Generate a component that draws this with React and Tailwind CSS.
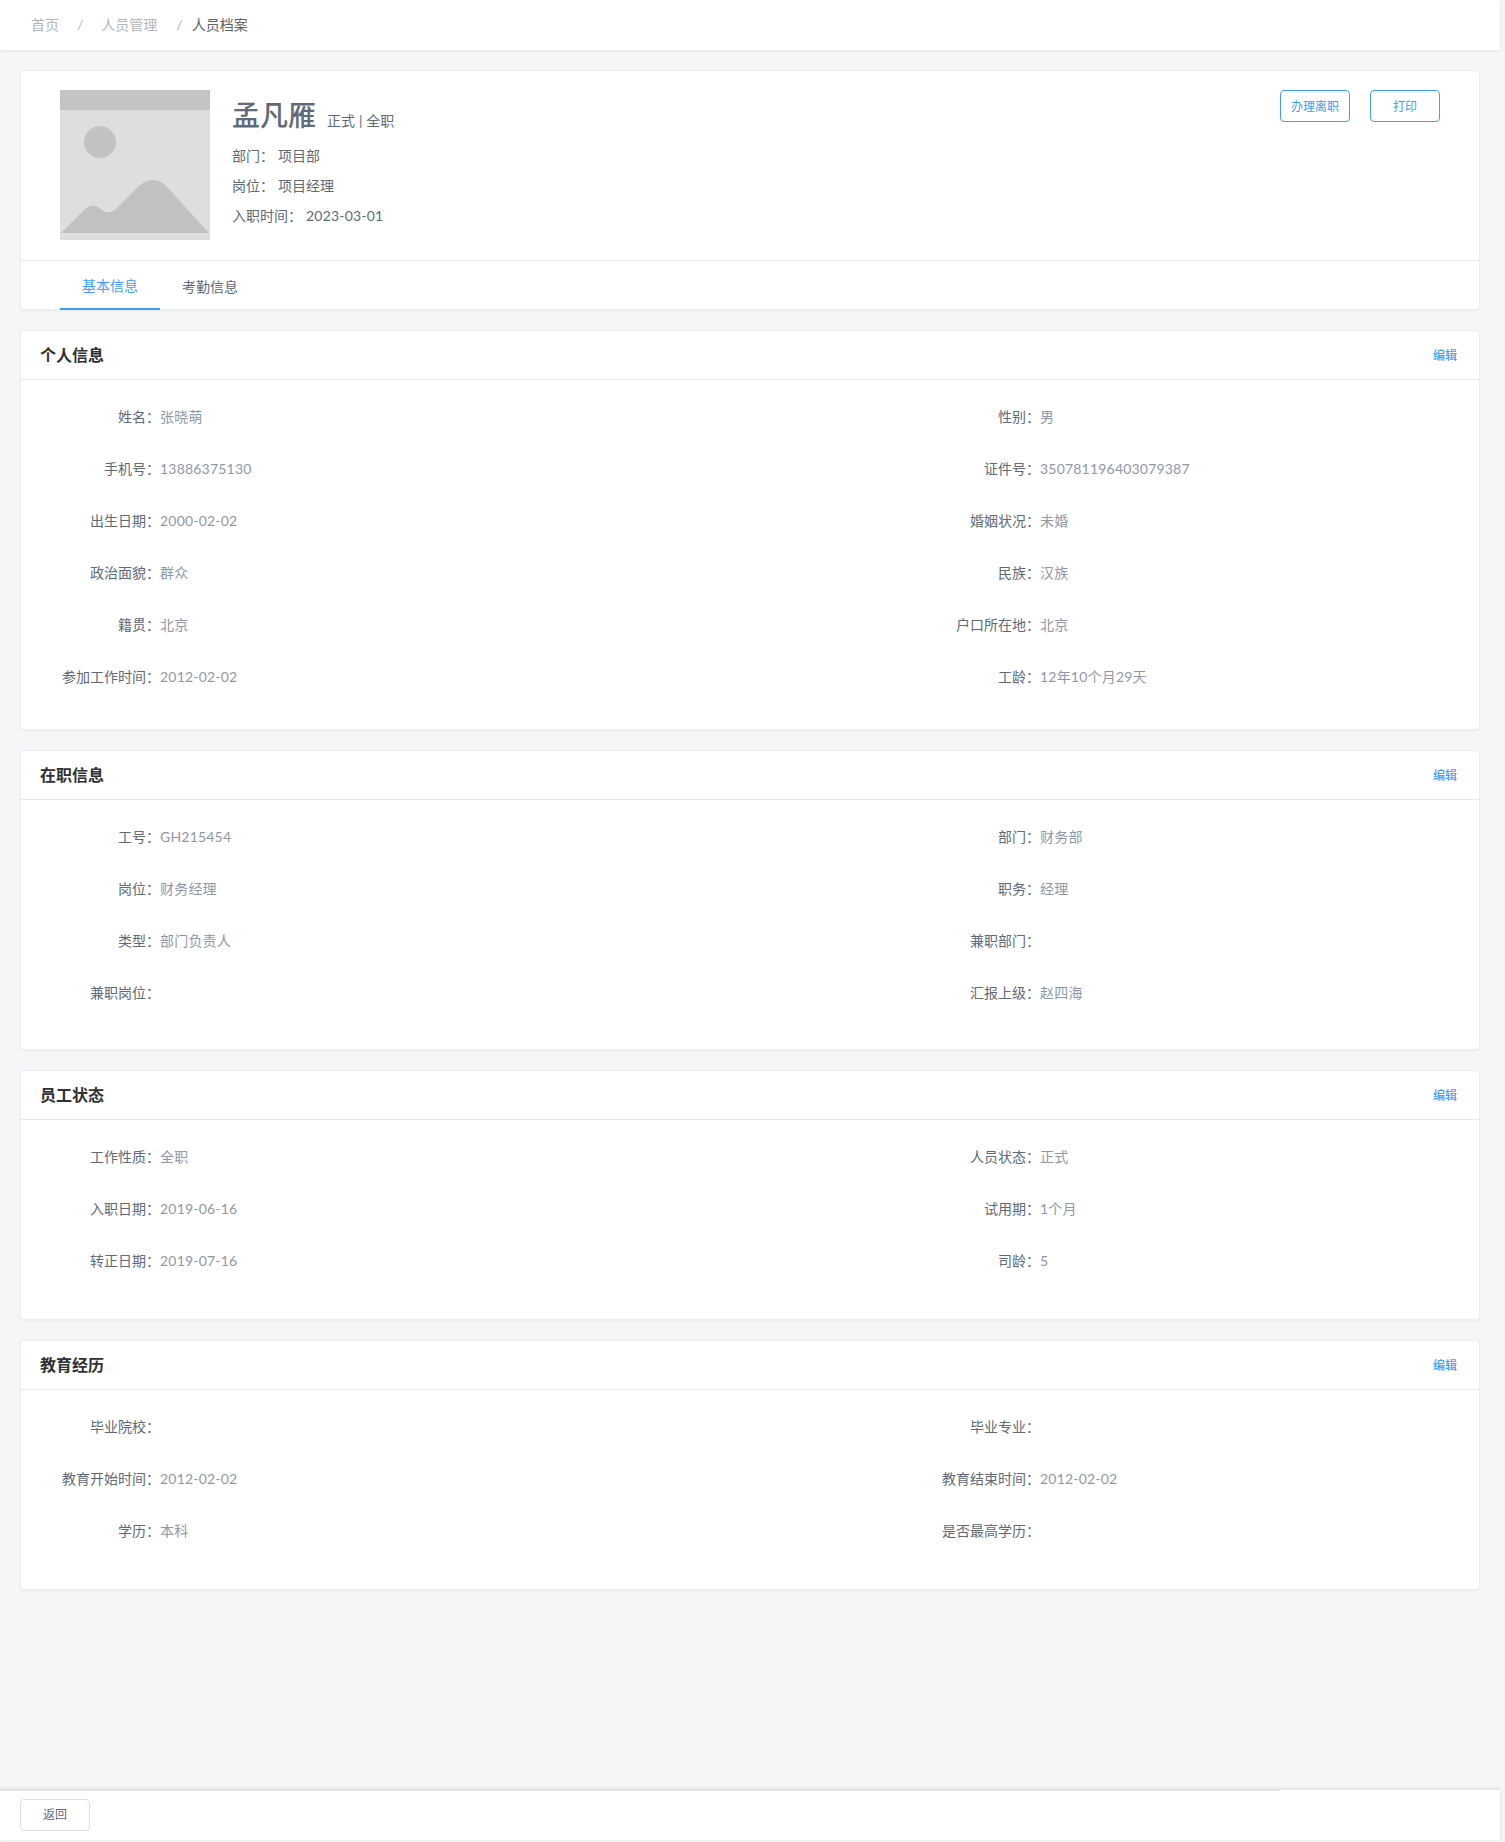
import React from 'react';

const Row = ({ label, value }) => (
  <div className="flex h-[32px] mb-[20px] items-center text-[14px]">
    <span className="w-[139px] shrink-0 text-right text-[#606a78]">{label}：</span>
    <span className="text-[#8f98a8] tracking-[0.2px]">{value}</span>
  </div>
);

const Section = ({ title, rows, className }) => (
  <section className={`bg-white border border-[#ebeef5] rounded shadow-[0_1px_3px_rgba(0,0,0,0.05)] ${className}`}>
    <div className="h-[49px] flex items-center justify-between pl-[19px] pr-[22px] border-b border-[#e8eaee]">
      <h2 className="text-[16px] font-bold text-[#303133]">{title}</h2>
      <a className="text-[12px] font-medium text-[#409eff] pt-[2px]">编辑</a>
    </div>
    <div className="grid grid-cols-[880px_1fr] pt-[20px]">
      {rows.map(([label, value]) => (
        <Row key={label} label={label} value={value} />
      ))}
    </div>
  </section>
);

const personal = [
  ['姓名', '张晓萌'], ['性别', '男'],
  ['手机号', '13886375130'], ['证件号', '350781196403079387'],
  ['出生日期', '2000-02-02'], ['婚姻状况', '未婚'],
  ['政治面貌', '群众'], ['民族', '汉族'],
  ['籍贯', '北京'], ['户口所在地', '北京'],
  ['参加工作时间', '2012-02-02'], ['工龄', '12年10个月29天'],
];

const job = [
  ['工号', 'GH215454'], ['部门', '财务部'],
  ['岗位', '财务经理'], ['职务', '经理'],
  ['类型', '部门负责人'], ['兼职部门', ''],
  ['兼职岗位', ''], ['汇报上级', '赵四海'],
];

const status = [
  ['工作性质', '全职'], ['人员状态', '正式'],
  ['入职日期', '2019-06-16'], ['试用期', '1个月'],
  ['转正日期', '2019-07-16'], ['司龄', '5'],
];

const education = [
  ['毕业院校', ''], ['毕业专业', ''],
  ['教育开始时间', '2012-02-02'], ['教育结束时间', '2012-02-02'],
  ['学历', '本科'], ['是否最高学历', ''],
];

const Placeholder = () => (
  <svg viewBox="0 0 150 150" className="w-[150px] h-[150px] shrink-0">
    <rect width="150" height="150" fill="#dddee0" />
    <rect width="150" height="20" fill="#c3c4c3" />
    <circle cx="40" cy="52" r="16" fill="#c1c2c4" />
    <path d="M1 143 L24 120 C30 114 36 115 42 120 C46 123 51 123 55 120 L79 96 C88 88 98 88 106 96 L149 143 Z" fill="#c0c1c3" />
  </svg>
);

export default function App() {
  return (
    <div className="min-h-[1842px] flex flex-col bg-[#f5f6f8] font-['Lato','Noto_Sans_CJK_SC',sans-serif]">
      <div className="w-[1500px] h-[50px] pb-px bg-white shadow-[0_1px_4px_rgba(0,0,0,0.08)] flex items-center pl-[31px] text-[14px]">
        <span className="text-[#b4b7bc]">首页</span>
        <span className="text-[#b4b7bc] ml-[18px]">/</span>
        <span className="text-[#b4b7bc] ml-[18px]">人员管理</span>
        <span className="text-[#b4b7bc] ml-[19px]">/</span>
        <span className="text-[#606266] ml-[9px]">人员档案</span>
      </div>

      <main className="w-[1500px] flex-1 px-[20px] pt-[20px] flex flex-col">
        <section className="bg-white border border-[#ebeef5] rounded shadow-[0_1px_3px_rgba(0,0,0,0.05)] h-[240px]">
          <div className="h-[190px] border-b border-[#e6e8ec] flex justify-between pt-[19px] px-[39px]">
            <div className="flex">
              <Placeholder />
              <div className="ml-[22px] text-[14px] text-[#606a78]">
                <div className="flex items-baseline h-[50px] pt-[4px]">
                  <span className="text-[28px] font-medium text-[#606a78]">孟凡雁</span>
                  <span className="ml-[11px] tracking-[0.1px]">正式 | 全职</span>
                </div>
                <div className="h-[30px] flex items-center">
                  <span className="w-[46px]">部门：</span><span>项目部</span>
                </div>
                <div className="h-[30px] flex items-center">
                  <span className="w-[46px]">岗位：</span><span>项目经理</span>
                </div>
                <div className="h-[30px] flex items-center">
                  <span className="w-[74px]">入职时间：</span><span className="tracking-[0.2px]">2023-03-01</span>
                </div>
              </div>
            </div>
            <div className="flex gap-[20px]">
              <button className="w-[70px] h-[32px] pt-px rounded border border-[#409eff] text-[12px] text-[#409eff] bg-white">办理离职</button>
              <button className="w-[70px] h-[32px] pt-px rounded border border-[#409eff] text-[12px] text-[#409eff] bg-white">打印</button>
            </div>
          </div>
          <div className="flex pl-[39px] h-[49px] text-[14px]">
            <div className="w-[100px] flex items-center justify-center pt-[2px] text-[#409eff] border-b-2 border-[#409eff]">基本信息</div>
            <div className="w-[100px] flex items-center justify-center pt-[2px] text-[#606a78]">考勤信息</div>
          </div>
        </section>

        <Section title="个人信息" rows={personal} className="mt-[20px] h-[400px]" />
        <Section title="在职信息" rows={job} className="mt-[20px] h-[300px]" />
        <Section title="员工状态" rows={status} className="mt-[20px] h-[250px]" />
        <Section title="教育经历" rows={education} className="mt-[20px] h-[250px]" />
      </main>

      <footer className="relative w-[1500px] h-[50px] mb-[2px] bg-white shadow-[0_-1px_4px_rgba(0,0,0,0.12)] flex items-center pl-[20px]">
        <div className="absolute left-0 top-0 w-[1280px] h-px bg-[#e3e6e5]" />
        <button className="w-[70px] h-[32px] rounded border border-[#dcdfe6] text-[12px] text-[#606a78] bg-white">返回</button>
      </footer>
    </div>
  );
}
